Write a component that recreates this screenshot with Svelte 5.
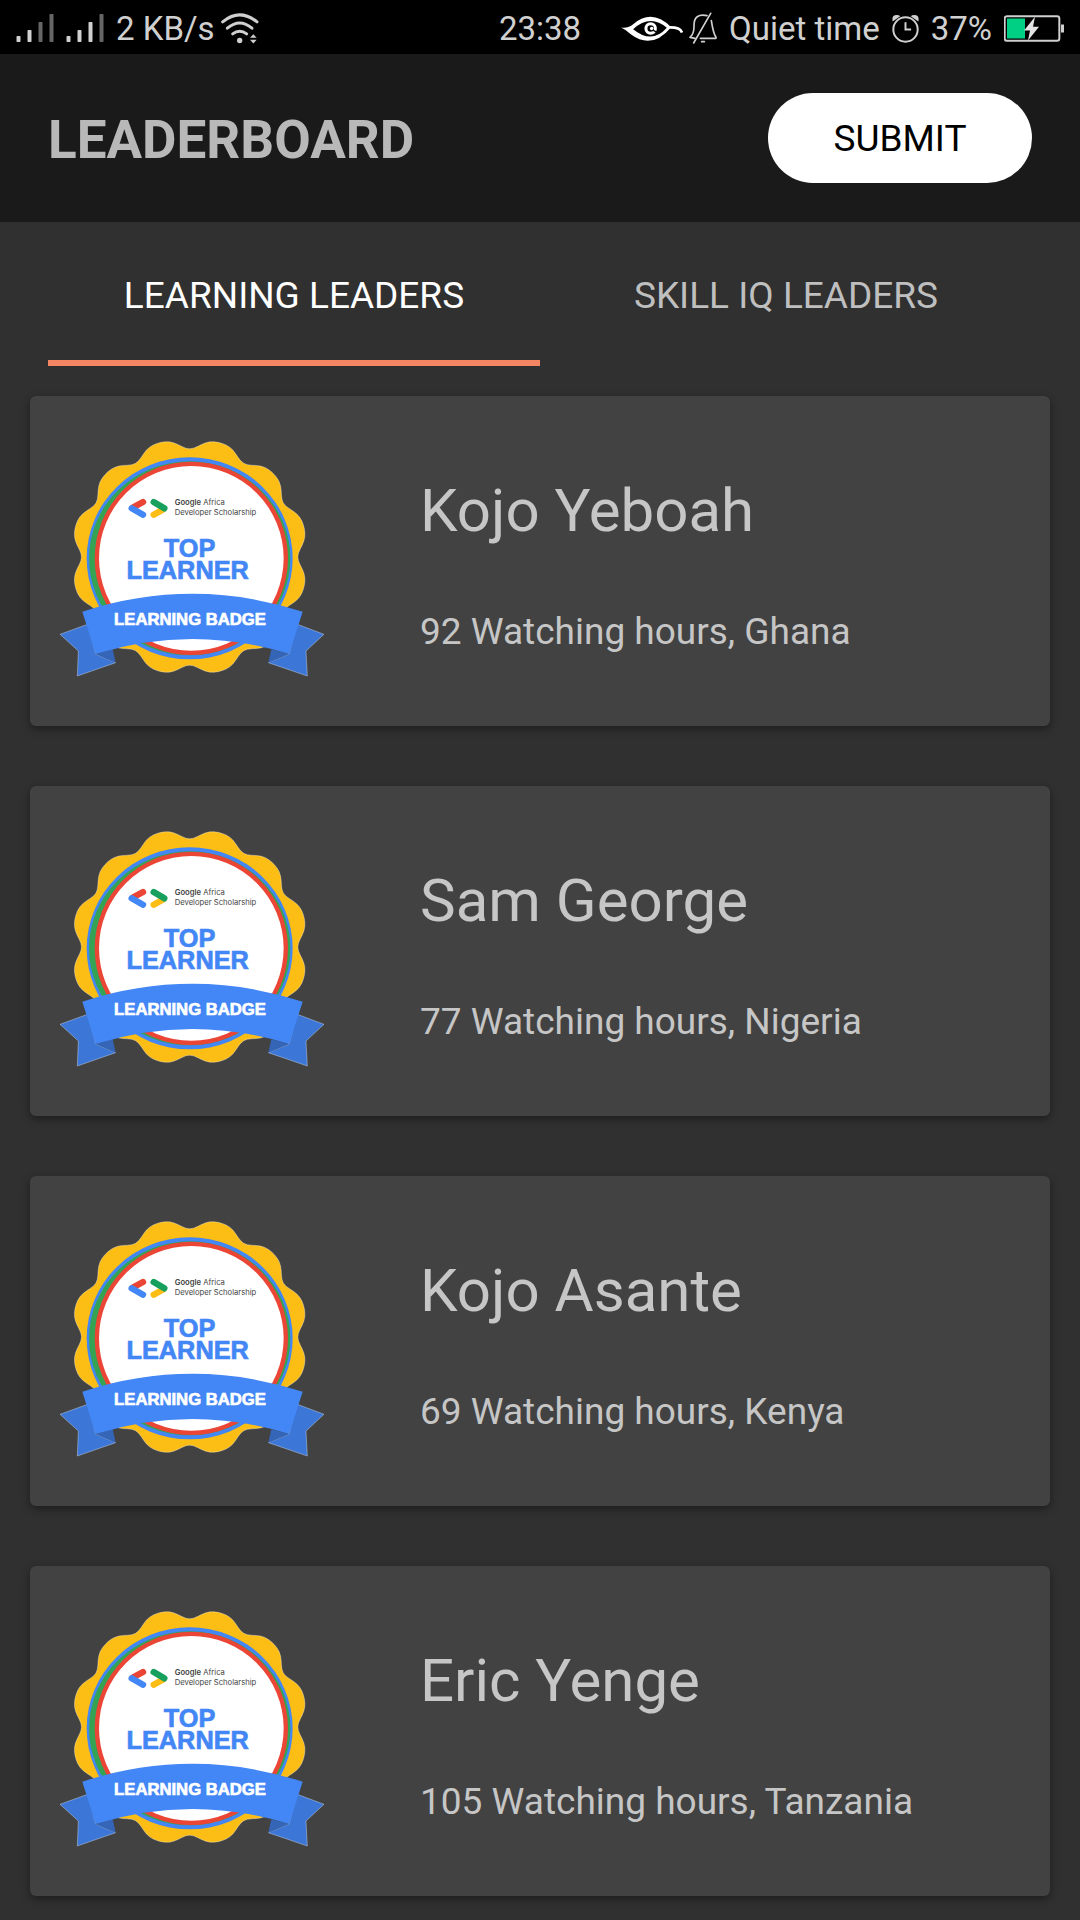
<script>
  const leaders = [
    { name: 'Kojo Yeboah', hours: 92, country: 'Ghana' },
    { name: 'Sam George', hours: 77, country: 'Nigeria' },
    { name: 'Kojo Asante', hours: 69, country: 'Kenya' },
    { name: 'Eric Yenge', hours: 105, country: 'Tanzania' }
  ];

  const tabs = ['LEARNING LEADERS', 'SKILL IQ LEADERS'];
  let active = $state(0);

  // Outline of the badge's rosette: a circle with twelve broad lobes.
  function rosette(cx, cy, radius, depth) {
    const points = [];
    for (let deg = 0; deg < 360; deg += 2) {
      const a = (deg * Math.PI) / 180;
      const r = radius - depth * Math.cos(12 * a) - 2.5 * Math.cos(24 * a);
      points.push(`${(cx + r * Math.sin(a)).toFixed(1)} ${(cy - r * Math.cos(a)).toFixed(1)}`);
    }
    return `M${points.join('L')}Z`;
  }
  const rosettePath = rosette(449, 411, 342, 15);
</script>

{#snippet signal(bars)}
  <svg class="signal" viewBox="0 0 111 84" aria-hidden="true">
    <rect x="0" y="66" width="12" height="18" rx="2" />
    <rect x="33" y="48" width="12" height="36" rx="2" />
    <rect x="66" y="24" width="12" height="60" rx="2" class:dim={bars < 3} />
    <rect x="99" y="0" width="12" height="84" rx="2" class="dim" />
  </svg>
{/snippet}

{#snippet badge()}
  <svg class="badge" viewBox="60 60 795 711" role="img" aria-label="Top learner, learning badge">
    <path class="edge" d={rosettePath} fill="#fcbd15" />
    <ellipse cx="449" cy="415" rx="309" ry="303" fill="#4386f5" />
    <ellipse cx="449" cy="415" rx="302" ry="291" fill="#34a353" />
    <circle cx="454" cy="415" r="290" fill="#ea4535" />
    <circle cx="454" cy="415" r="277" fill="#fff" />

    <g fill="none" stroke-width="19" stroke-linecap="round">
      <path d="M309 246L280 262" stroke="#ea4535" />
      <path d="M275 265L309 284" stroke="#4386f5" />
      <path d="M341 284L368 269" stroke="#fcbd15" />
      <path d="M341 246L373 265" stroke="#17a05d" />
    </g>
    <text class="org" x="404" y="256"><tspan class="strong">Google</tspan> Africa<tspan x="404" y="286">Developer Scholarship</tspan></text>
    <text class="award" x="449" y="410">TOP<tspan x="443" y="478">LEARNER</tspan></text>

    <path class="edge" d="M60 643L145 612L167 702L227 728L112 768L115 693Z" fill="#3c77d8" />
    <path class="edge" d="M852 643L770 612L747 702L685 728L802 768L798 693Z" fill="#3c77d8" />
    <path d="M167 702L218 688L227 728Z" fill="#3565b7" />
    <path d="M747 702L694 688L685 728Z" fill="#3565b7" />
    <path d="M127 575Q457 468 788 575L747 702Q457 612 167 702Z" fill="#4386f5" />
    <text class="ribbon" x="450" y="616">LEARNING BADGE</text>
  </svg>
{/snippet}

<div class="screen">
  <div class="status">
    <div class="group">
      {@render signal(2)}
      {@render signal(3)}
      <span>2 KB/s</span>
      <svg class="wifi" viewBox="662 34 114 92" aria-hidden="true">
        <g fill="none" stroke="#d0d0d0" stroke-width="9" stroke-linecap="round">
          <path d="M667 60Q718 18 770 60" />
          <path d="M681 79Q718 48 755 79" />
          <path d="M697 96Q718 80 739 96" />
        </g>
        <circle cx="718" cy="116" r="8" fill="#d0d0d0" />
        <path d="M749 108L759 97L769 108ZM749 114L759 125L769 114Z" fill="#d0d0d0" />
      </svg>
    </div>
    <span>23:38</span>
    <div class="group end">
      <svg class="eye" viewBox="428 40 184 80" aria-hidden="true">
        <path d="M428 77Q450 80 466 66Q520 20 577 76Q520 144 458 98Q444 84 428 77Z" fill="#fff" />
        <path d="M464 82Q515 36 564 78Q520 128 464 82Z" fill="#000" />
        <path d="M570 77Q604 76 609 92" fill="none" stroke="#fff" stroke-width="8" />
        <circle cx="516" cy="80" r="14" fill="none" stroke="#fff" stroke-width="9" />
        <circle cx="519" cy="80" r="5" fill="#fff" />
        <path d="M522 84L535 92" stroke="#000" stroke-width="4" />
      </svg>
      <svg class="bell" viewBox="630 35 84 96" aria-hidden="true">
        <g fill="none" stroke="#d0d0d0" stroke-width="5" stroke-linecap="round" stroke-linejoin="round">
          <path d="M684 46Q645 38 645 75Q646 100 633 111L648 114" />
          <path d="M697 61Q703 100 711 111L711 114L664 114" />
          <path d="M695 39L644 128" />
          <path d="M668 124H676" />
        </g>
      </svg>
      <span class="mode">Quiet time</span>
      <svg class="clock" viewBox="336 38 82 86" aria-hidden="true">
        <circle cx="377" cy="84" r="37" fill="none" stroke="#d0d0d0" stroke-width="6" />
        <path d="M377 62V84H394" fill="none" stroke="#d0d0d0" stroke-width="6" />
        <path d="M338 60Q334 40 350 40Q358 40 361 44Z M416 60Q420 40 404 40Q396 40 393 44Z" fill="#d0d0d0" />
      </svg>
      <span>37%</span>
      <svg class="battery" viewBox="672 41 180 80" aria-hidden="true">
        <rect x="674" y="44" width="164" height="74" rx="7" fill="none" stroke="#d0d0d0" stroke-width="6" />
        <rect x="843" y="69" width="9" height="24" fill="#d0d0d0" />
        <rect x="681" y="51" width="54" height="60" fill="#00d084" />
        <path d="M765 46L732 87H750L744 117L777 76H759Z" fill="#e4e4e4" />
      </svg>
    </div>
  </div>

  <header>
    <h1>LEADERBOARD</h1>
    <button class="submit" type="button">SUBMIT</button>
  </header>

  <div class="tabs" role="tablist">
    {#each tabs as tab, i}
      <button
        type="button"
        role="tab"
        class:active={active === i}
        aria-selected={active === i}
        onclick={() => (active = i)}>{tab}</button>
    {/each}
  </div>

  <main>
    {#each leaders as leader}
      <article>
        {@render badge()}
        <div class="info">
          <h2>{leader.name}</h2>
          <p>{leader.hours} Watching hours, {leader.country}</p>
        </div>
      </article>
    {/each}
  </main>
</div>

<style>
  :global(body) {
    margin: 0;
    background: #303030;
  }

  .screen {
    min-height: 100vh;
    background: #303030;
    color: #c6c6c6;
    font-family: Roboto, sans-serif;
  }

  .status {
    display: grid;
    grid-template-columns: 1fr auto 1fr;
    align-items: center;
    height: 54px;
    padding: 0 16px;
    background: #000;
    color: #d0d0d0;
    font-size: 33px;
    line-height: 54px;
    white-space: nowrap;
  }

  .status span {
    padding-top: 2px;
  }

  .group {
    display: flex;
    align-items: center;
    gap: 12px;
  }

  .group.end {
    justify-content: flex-end;
  }

  .signal {
    width: 38px;
    height: 28px;
    fill: #d0d0d0;
  }

  .signal .dim {
    fill: #666;
  }

  .wifi {
    width: 38px;
    height: 31px;
    margin-left: -6px;
  }

  .eye {
    width: 62px;
    height: 27px;
    margin-right: -6px;
  }

  .bell {
    width: 28px;
    height: 32px;
  }

  .clock {
    width: 27px;
    height: 29px;
  }

  .battery {
    width: 60px;
    height: 27px;
  }

  header {
    display: flex;
    align-items: center;
    justify-content: space-between;
    padding: 39px 48px;
    background: #1a1a1a;
  }

  h1 {
    margin: 0;
    padding-top: 4px;
    color: #b8b8b8;
    font-size: 53px;
    font-weight: 700;
    line-height: 64px;
  }

  button {
    margin: 0;
    border: 0;
    font-family: inherit;
    font-size: 37px;
    line-height: 44px;
    cursor: pointer;
  }

  .submit {
    min-width: 264px;
    padding: 24px 48px 22px;
    border-radius: 48px;
    background: #fff;
    color: #000;
  }

  .tabs {
    display: grid;
    grid-template-columns: 1fr 1fr;
    padding: 0 48px;
  }

  .tabs button {
    padding: 52px 0 42px;
    border-bottom: 6px solid transparent;
    background: none;
    color: #bfbfbf;
  }

  .tabs .active {
    border-color: #f48663;
    color: #fff;
  }

  main {
    display: grid;
    gap: 60px;
    padding: 30px 30px 24px;
  }

  article {
    display: flex;
    gap: 95px;
    padding: 44px 30px 49px;
    border-radius: 6px;
    background: #424242;
    box-shadow: 0 3px 8px rgba(0, 0, 0, 0.4);
  }

  .badge {
    flex: none;
    width: 265px;
    height: 237px;
  }

  .badge .edge {
    stroke: rgba(255, 255, 255, 0.5);
    stroke-width: 2px;
  }

  .badge .org {
    fill: #444;
    font-family: Inter, sans-serif;
    font-size: 23px;
  }

  .badge .strong {
    font-weight: 600;
  }

  .badge .award,
  .badge .ribbon {
    font-family: 'Liberation Sans', sans-serif;
    font-weight: 700;
    stroke-width: 2px;
    text-anchor: middle;
  }

  .badge .award {
    fill: #4386f5;
    stroke: #4386f5;
    font-size: 76px;
  }

  .badge .ribbon {
    fill: #fff;
    stroke: #fff;
    font-size: 50px;
  }

  .info {
    padding-top: 35px;
  }

  h2 {
    margin: 0;
    font-size: 60px;
    font-weight: 400;
    line-height: 72px;
  }

  p {
    margin: 63px 0 0;
    font-size: 37px;
    line-height: 44px;
  }
</style>
